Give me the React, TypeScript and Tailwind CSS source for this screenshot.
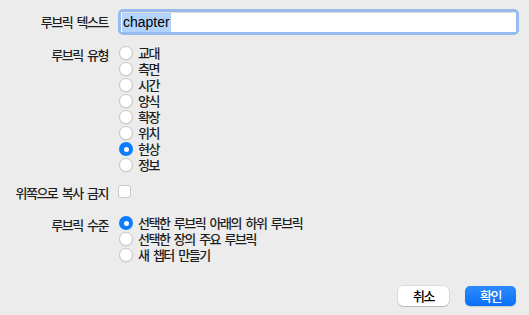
import { useState } from "react";

const RUBRIC_TYPES = ["교대", "측면", "시간", "양식", "확장", "위치", "현상", "정보"];
const RUBRIC_LEVELS = ["선택한 루브릭 아래의 하위 루브릭", "선택한 장의 주요 루브릭", "새 챕터 만들기"];

function Radio({ checked }: { checked: boolean }) {
  return checked ? (
    <span className="flex h-[14px] w-[14px] shrink-0 items-center justify-center rounded-full bg-[#0a7cff]">
      <span className="h-[5px] w-[5px] rounded-full bg-white" />
    </span>
  ) : (
    <span className="h-[14px] w-[14px] shrink-0 rounded-full border border-[#c9c9c9] bg-white shadow-[0_0.5px_1px_rgba(0,0,0,0.12)]" />
  );
}

function RadioGroup({
  options,
  value,
  onChange,
}: {
  options: string[];
  value: number;
  onChange: (i: number) => void;
}) {
  return (
    <div className="flex flex-col">
      {options.map((o, i) => (
        <button
          key={o}
          type="button"
          onClick={() => onChange(i)}
          className="flex h-4 items-center gap-[5px] pl-[1px] text-left [word-spacing:3px]"
        >
          <Radio checked={value === i} />
          <span>{o}</span>
        </button>
      ))}
    </div>
  );
}

export default function App() {
  const [type, setType] = useState(6);
  const [level, setLevel] = useState(0);
  const [noCopy, setNoCopy] = useState(false);

  const label = "text-right pr-[10px]";

  return (
    <div className="h-[315px] w-[529px] bg-[#ececec] text-[13px] leading-4 font-medium tracking-[-1.5px] [word-spacing:3px] text-[#1e1e1e] [font-family:'Noto_Sans_CJK_KR',sans-serif]">
      <div className="grid grid-cols-[118px_1fr] pt-[9px] pr-[10px]">
        {/* text */}
        <div className={`${label} self-center`}>루브릭 텍스트</div>
        <div className="h-[26px] rounded-[5px] bg-[#97bbef] p-[3px]">
          <div className="flex h-full w-full items-center bg-white pl-[1px] text-[14px] font-normal tracking-normal [word-spacing:0] text-black [font-family:'Liberation_Sans',sans-serif] shadow-[inset_0_1px_0_rgba(0,0,0,0.12)]">
            <span className="bg-[#b2d4fb] px-[1px] leading-[19px]">chapter</span>
          </div>
        </div>

        {/* type */}
        <div className={`${label} mt-[12px]`}>루브릭 유형</div>
        <div className="mt-[10px]">
          <RadioGroup options={RUBRIC_TYPES} value={type} onChange={setType} />
        </div>

        {/* no copy */}
        <div className={`${label} mt-[12px]`}>위쪽으로 복사 금지</div>
        <div className="mt-[12px]">
          <button
            type="button"
            onClick={() => setNoCopy(!noCopy)}
            className="flex h-[13px] w-[13px] items-center justify-center rounded-[3px] border border-[#c9c9c9] bg-white text-[10px] text-white"
          >
            {noCopy ? "✓" : ""}
          </button>
        </div>

        {/* level */}
        <div className={`${label} mt-[16px]`}>루브릭 수준</div>
        <div className="mt-[14px]">
          <RadioGroup options={RUBRIC_LEVELS} value={level} onChange={setLevel} />
        </div>
      </div>

      <div className="mt-[23px] flex justify-end gap-4 pr-[13px]">
        <button
          type="button"
          className="h-5 w-[51px] rounded-[5px] bg-white text-black shadow-[0_0_0_0.5px_rgba(0,0,0,0.15),0_1px_1px_rgba(0,0,0,0.15)]"
        >
          취소
        </button>
        <button
          type="button"
          className="h-5 w-[51px] rounded-[5px] bg-gradient-to-b from-[#2a8bff] to-[#0a6ff8] text-white shadow-[0_1px_1px_rgba(0,0,0,0.15)]"
        >
          확인
        </button>
      </div>
    </div>
  );
}
